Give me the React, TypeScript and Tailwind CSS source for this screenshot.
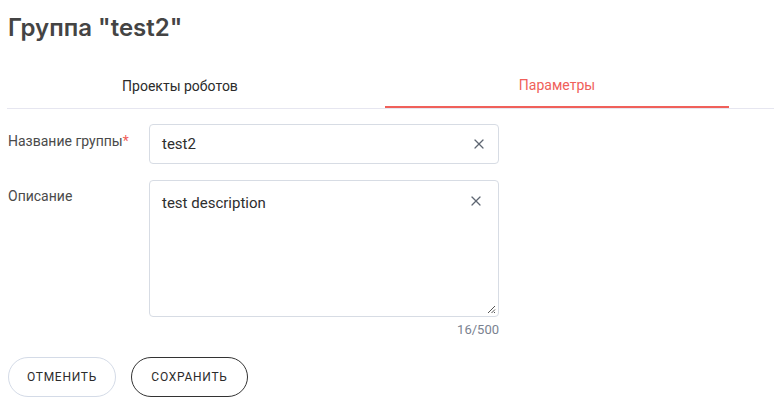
import { X } from "lucide-react";

export default function App() {
  return (
    <div className="w-[774px] h-[406px] bg-white font-['Roboto',sans-serif] text-[#333] overflow-hidden">
      <h1 className="pl-2 pt-[14px] h-[44px] text-[24px] leading-[28px] font-semibold text-[#444] font-['Inter',sans-serif]">
        Группа "test2"
      </h1>

      {/* tabs */}
      <div className="mt-[21px] ml-[7px] flex border-b border-[#e6e6f0] text-[14px]">
        <div className="w-[346px] h-[43px] flex items-center justify-center text-[#2b2b2b]">
          Проекты роботов
        </div>
        <div className="ml-[32px] w-[344px] h-[43px] flex items-center justify-center text-[#f0605a] border-b-2 border-[#f0605a] -mb-px">
          Параметры
        </div>
      </div>

      {/* form */}
      <div className="mt-[15px] px-2">
        <div className="flex">
          <label className="w-[141px] pt-[7px] text-[14px] text-[#4a4a4a]">
            Название группы<span className="text-[#f0605a]">*</span>
          </label>
          <div className="w-[350px] h-[40px] border border-[#d7dce4] rounded-[4px] flex items-center pl-[12px] pr-[11px]">
            <span className="flex-1 text-[15px] text-[#2e2e2e]">test2</span>
            <X className="w-[16px] h-[16px] text-[#5f6672]" strokeWidth={1.8} />
          </div>
        </div>

        <div className="flex mt-[16px]">
          <label className="w-[141px] pt-[6px] text-[14px] text-[#4a4a4a]">Описание</label>
          <div>
            <div className="relative w-[350px] h-[137px] border border-[#d7dce4] rounded-[4px] pl-[12px] pr-[12px] pt-[11px]">
              <div className="flex items-start">
                <span className="flex-1 text-[15px] text-[#2e2e2e]">test description</span>
                <X className="w-[16px] h-[16px] mt-[1px] mr-[2px] text-[#5f6672]" strokeWidth={1.8} />
              </div>
              <svg className="absolute right-[2px] bottom-[2px]" width="9" height="9" viewBox="0 0 9 9">
                <path d="M8 1 L1 8 M8 4.5 L4.5 8 M8 7 L7 8" stroke="#555" strokeWidth="1" />
              </svg>
            </div>
            <div className="mt-[3px] text-right text-[13px] text-[#7a8290]">16/500</div>
          </div>
        </div>

        <div className="flex gap-[15px] mt-[17px]">
          <button className="w-[108px] h-[40px] rounded-full border border-[#d4dbe7] text-[12px] tracking-[0.06em] text-[#2b2b2b]">
            ОТМЕНИТЬ
          </button>
          <button className="w-[117px] h-[40px] rounded-full border border-[#333] text-[12px] tracking-[0.06em] text-[#2b2b2b]">
            СОХРАНИТЬ
          </button>
        </div>
      </div>
    </div>
  );
}
